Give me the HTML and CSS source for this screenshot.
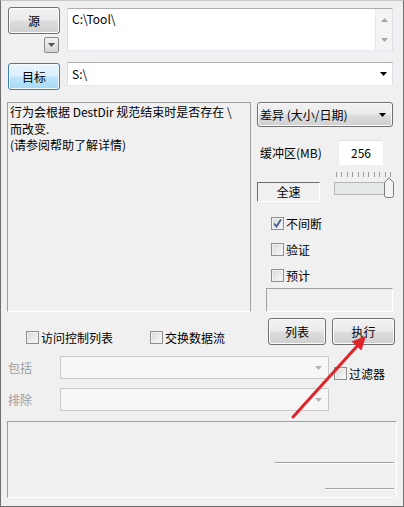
FILE: index.html
```html
<!DOCTYPE html>
<html lang="zh">
<head>
<meta charset="utf-8">
<link rel="stylesheet" href="styles.css">
</head>
<body>
<div class="window">
  <div class="row row-src">
    <div class="src-col">
      <div class="btn btn-src">源</div>
      <div class="mini-drop"><svg width="7" height="4" viewBox="0 0 7 4"><path d="M0 0H7L3.5 4Z" fill="#555"/></svg></div>
    </div>
    <div class="textarea">
      <span class="ta-text">C:\Tool\</span>
      <div class="vscroll">
        <svg width="7" height="4" viewBox="0 0 7 4"><path d="M0 4H7L3.5 0Z" fill="#a6a6a6"/></svg>
        <svg width="7" height="4" viewBox="0 0 7 4"><path d="M0 0H7L3.5 4Z" fill="#a6a6a6"/></svg>
      </div>
    </div>
  </div>

  <div class="row row-dest">
    <div class="btn btn-blue">目标</div>
    <div class="combo combo-white">
      <span>S:\</span>
      <svg width="7" height="4" viewBox="0 0 7 4"><path d="M0 0H7L3.5 4Z" fill="#000"/></svg>
    </div>
  </div>

  <div class="row row-mid">
    <div class="info">行为会根据 DestDir 规范结束时是否存在 \<br>而改变.<br>(请参阅帮助了解详情)</div>
    <div class="side">
      <div class="combo combo-gray">
        <span>差异 (大小/日期)</span>
        <svg width="7" height="4" viewBox="0 0 7 4"><path d="M0 0H7L3.5 4Z" fill="#000"/></svg>
      </div>
      <div class="buf">
        <span class="buf-label">缓冲区(MB)</span>
        <div class="num">256</div>
      </div>
      <div class="speed">
        <div class="speed-box">全速</div>
        <div class="slider">
          <div class="ticks">
            <i></i><i></i><i></i><i></i><i></i><i></i><i></i><i></i><i></i><i></i><i></i>
          </div>
          <div class="track"></div>
          <svg class="thumb" width="10" height="21" viewBox="0 0 10 21"><path d="M0.5 5.5L5 0.8L9.5 5.5V18.5Q9.5 20.5 7.5 20.5H2.5Q0.5 20.5 0.5 18.5Z" fill="#f3f3f3" stroke="#7a7a7a"/></svg>
        </div>
      </div>
      <div class="chk chk-first"><span class="cb"><svg width="11" height="11" viewBox="0 0 11 11"><path d="M2 5.5L4.5 8.5L9 1.5" fill="none" stroke="#3d5a98" stroke-width="1.8"/></svg></span>不间断</div>
      <div class="chk"><span class="cb"></span>验证</div>
      <div class="chk"><span class="cb"></span>预计</div>
      <div class="empty-box"></div>
    </div>
  </div>

  <div class="row row-opts">
    <div class="chk chk-acl"><span class="cb"></span>访问控制列表</div>
    <div class="chk chk-ads"><span class="cb"></span>交换数据流</div>
    <div class="btn btn-list">列表</div>
    <div class="btn btn-run">执行</div>
  </div>

  <div class="row row-filter">
    <div class="filters">
      <div class="frow"><span class="flabel">包括</span><div class="combo combo-dis"><svg width="7" height="4" viewBox="0 0 7 4"><path d="M0 0H7L3.5 4Z" fill="#b4b4b4"/></svg></div></div>
      <div class="frow frow2"><span class="flabel">排除</span><div class="combo combo-dis"><svg width="7" height="4" viewBox="0 0 7 4"><path d="M0 0H7L3.5 4Z" fill="#b4b4b4"/></svg></div></div>
    </div>
    <div class="chk chk-filter"><span class="cb"></span>过滤器</div>
  </div>

  <div class="status">
    <div class="sline sline1"></div>
    <div class="sline sline2"></div>
  </div>

  <svg class="arrow" width="404" height="507" viewBox="0 0 404 507">
    <line x1="293" y1="417" x2="359" y2="344" stroke="#e3232b" stroke-width="3" stroke-linecap="round"/>
    <path d="M366 336L361.5 350.5L351.5 341.5Z" fill="#e3232b"/>
  </svg>
</div>
</body>
</html>
```

FILE: styles.css
```css
* { box-sizing: border-box; }
html, body { margin: 0; padding: 0; background: #f0f0f0; }
body {
  font-family: "Noto Sans CJK SC", "Noto Sans", sans-serif;
  font-size: 12px;
  line-height: 16px;
  color: #000;
}
.window {
  position: relative;
  width: 404px;
  height: 507px;
  background: #f0f0f0;
  border: 1px solid #6f6f6f;
  border-top-color: #c8c8c8;
  overflow: hidden;
}
.row { display: flex; }

/* buttons */
.btn {
  display: flex;
  align-items: center;
  justify-content: center;
  height: 27px;
  border: 1px solid #707070;
  border-radius: 3px;
  background: linear-gradient(#f2f2f2 0%, #ebebeb 48%, #dddddd 52%, #cfcfcf 100%);
  box-shadow: inset 0 0 0 1px #fcfcfc;
  font-size: 12px;
}
.btn-blue {
  border-color: #3c7fb1;
  background: linear-gradient(#eaf6fd 0%, #d9f0fc 48%, #bee6fd 52%, #a7d9f5 100%);
  box-shadow: inset 0 0 0 1px #f4fbff;
}

/* row 1 */
.row-src { margin-top: 6px; padding-left: 7px; }
.src-col { width: 52px; display: flex; flex-direction: column; align-items: flex-end; }
.btn-src { width: 52px; }
.mini-drop {
  width: 15px; height: 16px; margin-top: 3px; margin-right: 1px;
  border: 1px solid #8a8a8a; border-radius: 2px;
  background: linear-gradient(#f0f0f0, #d6d6d6);
  display: flex; align-items: center; justify-content: center;
}
.textarea {
  margin-left: 7px; margin-top: 1px;
  width: 326px; height: 43px;
  background: #fff;
  border: 1px solid #dbdfe6;
  border-top-color: #abadb3;
  border-bottom-color: #e3e9ef;
  display: flex;
}
.ta-text { flex: 1; padding: 2px 0 0 4px; }
.vscroll {
  width: 17px;
  background: #f4f4f4;
  border-left: 1px solid #e8e8e8;
  display: flex; flex-direction: column; align-items: center;
  justify-content: space-between;
  padding: 9px 0 8px;
}

/* row 2 */
.row-dest { margin-top: 9px; padding-left: 7px; }
.btn-blue { width: 52px; margin-top: 1px; }
.combo {
  display: flex; align-items: center; justify-content: space-between;
}
.combo-white {
  margin-left: 7px; width: 326px; height: 24px;
  background: #fff;
  border: 1px solid #dbdfe6;
  border-top-color: #abadb3;
  border-bottom-color: #e3e9ef;
  padding: 0 5px 0 4px;
}

/* middle */
.row-mid { margin-top: 12px; padding-left: 6px; }
.info {
  width: 244px; height: 210px;
  border: 1px solid #a0a0a0;
  border-bottom-color: #fff;
  padding: 1px 0 0 2px;
  line-height: 16.5px;
}
.side { margin-left: 6px; width: 136px; display: flex; flex-direction: column; }
.combo-gray {
  height: 25px;
  border: 1px solid #707070; border-radius: 3px;
  background: linear-gradient(#f2f2f2 0%, #ebebeb 48%, #dddddd 52%, #cfcfcf 100%);
  box-shadow: inset 0 0 0 1px #fbfbfb;
  padding: 0 6px 0 2px;
}
.buf { margin-top: 13px; height: 25px; display: flex; align-items: center; }
.buf-label { padding-left: 3px; }
.num {
  margin-left: auto; margin-right: 10px;
  width: 45px; height: 25px;
  background: #fff;
  border-top: 1px solid #e2e2e2;
  border-left: 1px solid #ececec;
  display: flex; align-items: center; justify-content: center;
}
.speed { margin-top: 7px; display: flex; }
.speed-box {
  margin-top: 10px;
  width: 63px; height: 20px;
  border: 1px solid #fff;
  border-top-color: #6d6d6d; border-left-color: #6d6d6d;
  display: flex; align-items: center; justify-content: center;
  line-height: 16px;
}
.slider { margin-left: auto; margin-right: -1px; width: 60px; height: 25px; position: relative; display: flex; flex-direction: column; }
.ticks { display: flex; justify-content: space-between; padding: 0 3px 0 2px; height: 6px; }
.ticks i { display: block; width: 1px; height: 5px; background: #9a9a9a; }
.track {
  margin-top: 4px; margin-left: 0; width: 54px; height: 13px;
  border: 1px solid #b6b6b6;
  background: #e7eaea;
}
.thumb { position: absolute; right: 0; top: 5px; }

.chk { display: flex; align-items: center; height: 13px; white-space: nowrap; }
.cb {
  width: 13px; height: 13px; flex: none;
  border: 1px solid #8e8f8f;
  background: linear-gradient(135deg, #d8d8d8, #fafafa);
  box-shadow: inset 0 0 0 1px #f0f0f0;
  margin-right: 2px;
  display: flex; align-items: center; justify-content: center;
}
.side .chk { margin-top: 13px; padding-left: 14px; }
.side .chk-first { margin-top: 15px; }
.empty-box {
  margin-top: 6px; margin-left: 9px;
  width: 127px; height: 24px;
  border: 1px solid #a0a0a0;
  border-right-color: #fff; border-bottom-color: #fff;
}

/* options row */
.row-opts { margin-top: 6px; padding-left: 25px; padding-right: 8px; height: 27px; }
.row-opts .chk { margin-top: 13px; }
.chk-acl { width: 124px; }
.btn-list { margin-left: auto; width: 58px; }
.btn-run { margin-left: 6px; width: 63px; }

/* filters */
.row-filter { margin-top: 11px; padding-left: 7px; }
.frow { display: flex; align-items: center; }
.frow2 { margin-top: 9px; }
.flabel { width: 52px; color: #9d9d9d; }
.combo-dis {
  width: 269px; height: 23px;
  background: #f7f7f7;
  border: 1px solid #c9c9c9;
  justify-content: flex-end;
  padding-right: 6px;
}
.chk-filter { margin-left: 5px; margin-top: 11px; }

/* status */
.status {
  margin-top: 10px; margin-left: 6px;
  width: 390px; height: 77px;
  border: 1px solid #a0a0a0;
  border-right-color: #fff; border-bottom-color: #fff;
  display: flex; flex-direction: column; align-items: flex-end;
  padding-right: 2px;
}
.sline { height: 2px; border-top: 1px solid #a0a0a0; border-bottom: 1px solid #fff; }
.sline1 { width: 119px; margin-top: 40px; }
.sline2 { width: 69px; margin-top: 24px; }

.arrow { position: absolute; left: -1px; top: -1px; pointer-events: none; }
```
